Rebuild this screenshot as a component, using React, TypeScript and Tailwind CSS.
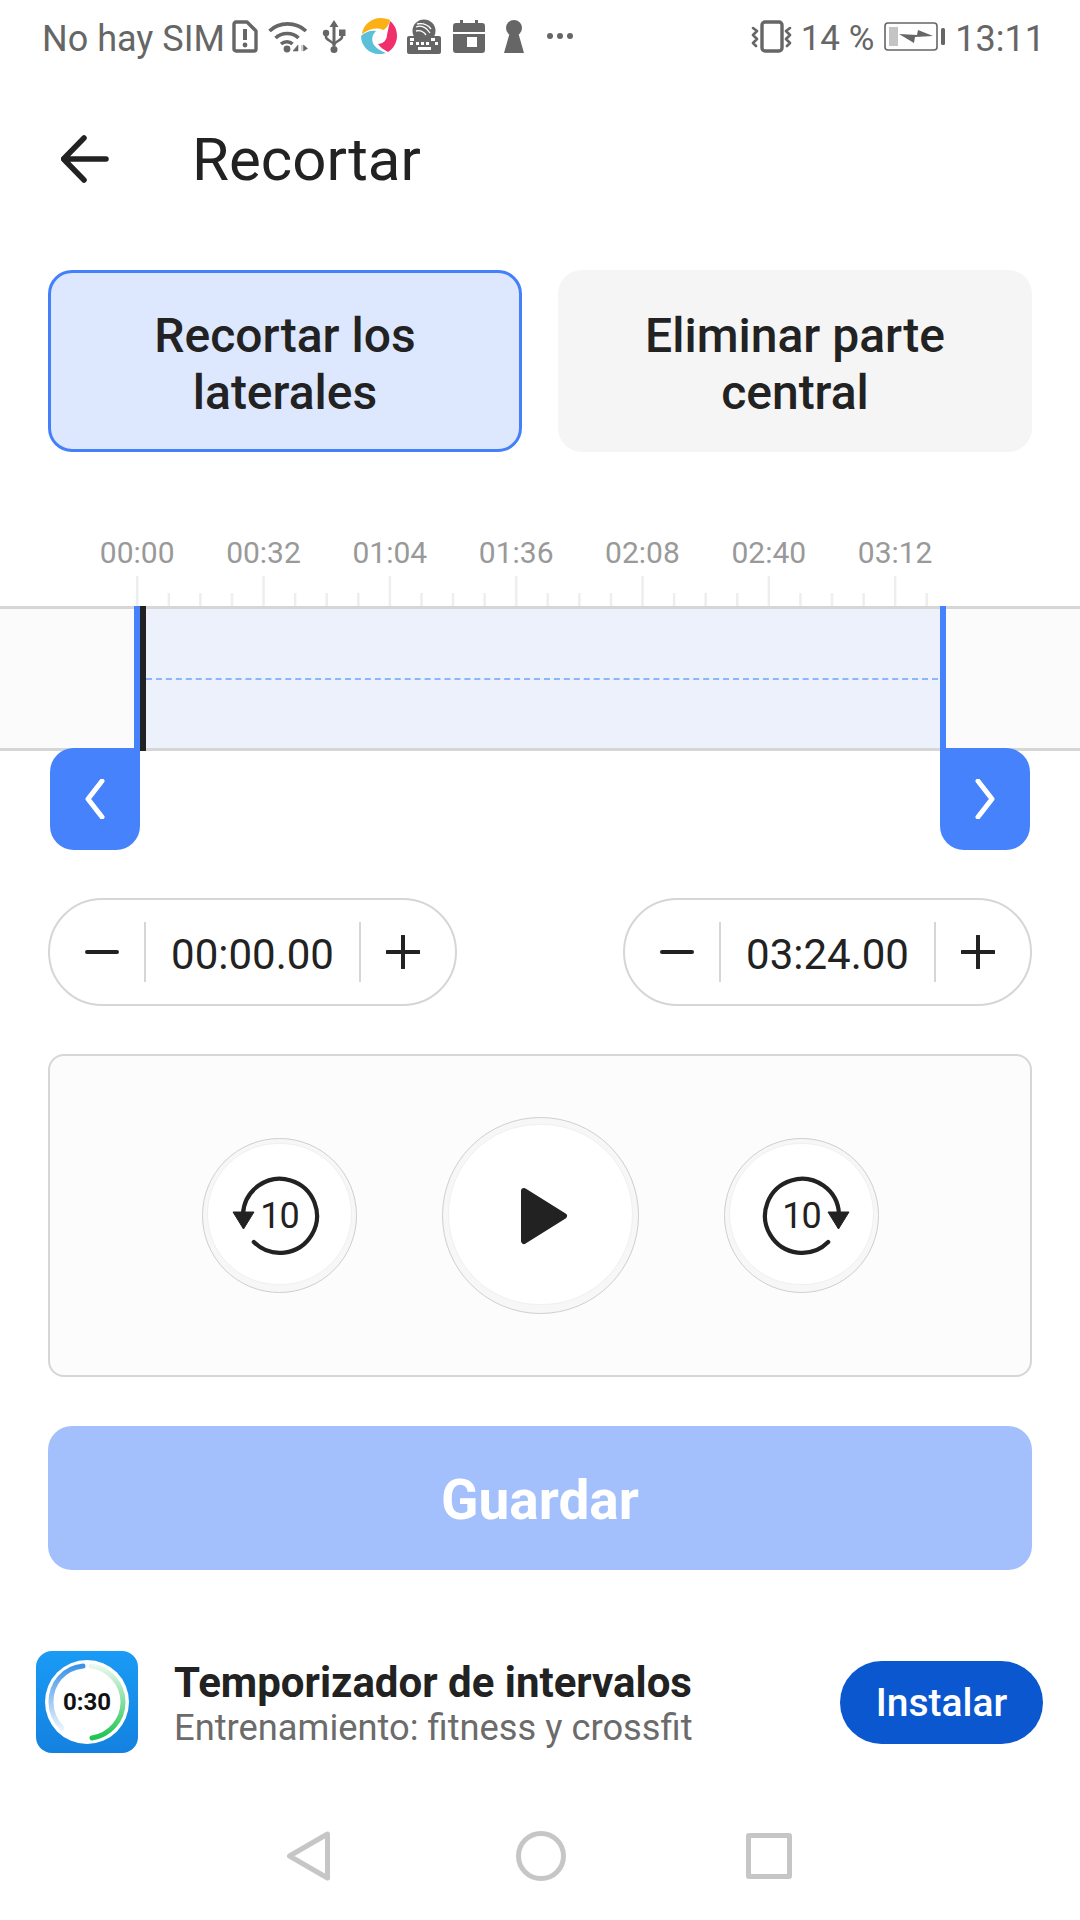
const roboto = "font-['Roboto',sans-serif]";

const rulerLabels = ["00:00", "00:32", "01:04", "01:36", "02:08", "02:40", "03:12"];

function SimAlert() {
  return (
    <svg width="26" height="33" viewBox="0 0 26 33" className="ml-[24px]">
      <path d="M4 2h11l9 9v18a2 2 0 0 1-2 2H4a2 2 0 0 1-2-2V4a2 2 0 0 1 2-2z" fill="none" stroke="#666" strokeWidth="3.4" strokeLinejoin="round" />
      <path d="M13 9v11" stroke="#666" strokeWidth="4" />
      <circle cx="13" cy="25" r="2.4" fill="#666" />
    </svg>
  );
}

function Wifi() {
  return (
    <svg width="40" height="33" viewBox="0 0 40 33" className="ml-[10px]">
      <g fill="none" stroke="#666" strokeWidth="3.6">
        <path d="M1.5 11C11 1.5 28 1.5 38 11" />
        <path d="M7.5 18c6.5-6 17-6 23 0" />
        <path d="M13 24c3.500-3 8.500-3 11.500 0" />
      </g>
      <circle cx="19" cy="29" r="3.400" fill="#666" />
      <path d="M25 31l5-6v6zM34 25v6M35.500 25l4 3.500-4 2.500z" fill="#666" stroke="#666" strokeWidth="0.6" />
    </svg>
  );
}

function Usb() {
  return (
    <svg width="24" height="35" viewBox="0 0 24 35" className="ml-[14px]">
      <path d="M12 1l4.500 7h-3v19h-3V8h-3z" fill="#666" />
      <circle cx="12" cy="30.500" r="3.500" fill="#666" />
      <circle cx="4" cy="14" r="3.200" fill="#666" />
      <rect x="17" y="10.500" width="6.500" height="6.500" fill="#666" />
      <path d="M4 15v3c0 3 8 5 8 8M20 15v3c0 3-8 5-8 8" fill="none" stroke="#666" strokeWidth="2.600" />
    </svg>
  );
}

function Pinwheel() {
  return (
    <svg width="36" height="36" viewBox="0 0 36 36" className="ml-[15px]">
      <path d="M1 16C2 7 10 0 20 0c4 0 7 1 9 2-1 5-4 9-7 10-6-3-14-1-21 4z" fill="#fbb016" />
      <path d="M29 3c5 4 7 9 7 15 0 7-4 13-9 16-4-2-8-5-10-8 5 0 9-4 9-9 1-5 2-10 3-14z" fill="#f0306c" />
      <path d="M0 18c4-4 10-6 15-5-4 4-5 9-2 14 3 4 7 6 12 8-3 1-5 1-7 1C8 36 0 28 0 18z" fill="#5cc0d8" />
    </svg>
  );
}

function Swiftkey() {
  return (
    <svg width="34" height="35" viewBox="0 0 34 35" className="ml-[10px]">
      <circle cx="17" cy="12" r="11.500" fill="#666" />
      <path d="M9 8c5-2 10 0 14 6M10 5c6-1 11 1 14 5M9 12c4-1 7 0 10 4" fill="none" stroke="#fff" strokeWidth="1.300" />
      <path d="M2 17h30a2 2 0 0 1 2 2v14a2 2 0 0 1-2 2H2a2 2 0 0 1-2-2V19a2 2 0 0 1 2-2z" fill="#666" />
      <path d="M3 19h4v3H3zM9 23h3v3H9zM14 23h3v3h-3zM19 23h3v3h-3zM24 19h4v3h-4zM28 23h3v3h-3zM3 23h3v3H3zM11 28h13v3H11z" fill="#fff" />
    </svg>
  );
}

function CalendarIcon() {
  return (
    <svg width="32" height="33" viewBox="0 0 32 33" className="ml-[12px]">
      <path d="M3 3h26a3 3 0 0 1 3 3v6H0V6a3 3 0 0 1 3-3zM0 14h32v16a3 3 0 0 1-3 3H3a3 3 0 0 1-3-3z" fill="#666" />
      <rect x="7" y="0" width="3" height="4" fill="#666" />
      <rect x="22" y="0" width="3" height="4" fill="#666" />
      <rect x="14" y="17" width="10" height="10" fill="#fff" />
    </svg>
  );
}

function Keyhole() {
  return (
    <svg width="20" height="33" viewBox="0 0 20 33" className="ml-[19px]">
      <circle cx="10" cy="8" r="8" fill="#666" />
      <path d="M6 12h8l6 21H0z" fill="#666" />
    </svg>
  );
}

function Vibrate() {
  return (
    <svg width="41" height="33" viewBox="0 0 41 33">
      <rect x="11" y="2" width="20" height="29" rx="3" fill="none" stroke="#666" strokeWidth="3.400" />
      <path d="M2 8l4 3-4 4 4 4-4 4 3 3M39 8l-4 3 4 4-4 4 4 4-3 3" fill="none" stroke="#666" strokeWidth="2.600" strokeLinecap="round" strokeLinejoin="round" />
    </svg>
  );
}

function Battery() {
  return (
    <svg width="61" height="29" viewBox="0 0 61 29" className="ml-[10px]">
      <rect x="1" y="1" width="52" height="27" rx="3" fill="none" stroke="#666" strokeWidth="1.600" />
      <rect x="5" y="5" width="9" height="19" fill="#c4c4c4" />
      <path d="M15 12l18 1 1-5 15 6-18 1-1 6z" fill="#666" />
      <rect x="57" y="6" width="4" height="17" rx="1.500" fill="#666" />
    </svg>
  );
}

function StatusBar() {
  return (
    <div className={`flex items-center justify-between h-[72px] pl-[43px] pr-[35px] text-[#666] ${roboto}`}>
      <div className="flex items-center">
        <span className="text-[36px] leading-none pt-[5px] -ml-[1px] -mr-[17px]">No hay SIM</span>
        <SimAlert />
        <Wifi />
        <Usb />
        <Pinwheel />
        <Swiftkey />
        <CalendarIcon />
        <Keyhole />
        <div className="flex gap-[4px] ml-[23px]">
          <span className="w-[6px] h-[6px] rounded-full bg-[#666]" />
          <span className="w-[6px] h-[6px] rounded-full bg-[#666]" />
          <span className="w-[6px] h-[6px] rounded-full bg-[#666]" />
        </div>
      </div>
      <div className="flex items-center">
        <Vibrate />
        <span className="text-[35px] leading-none pt-[5px] ml-[9px]">14 %</span>
        <Battery />
        <span className="text-[36px] leading-none pt-[5px] ml-[10px]">13:11</span>
      </div>
    </div>
  );
}

function Header() {
  return (
    <div className="flex items-center h-[198px] pl-[61px] pb-[25px]">
      <svg width="48" height="48" viewBox="0 0 48 48">
        <path d="M45 24H3M23 3L2.500 24 23 45" fill="none" stroke="#222" strokeWidth="5.500" strokeLinecap="round" strokeLinejoin="round" />
      </svg>
      <h1 className={`ml-[83px] pt-[2px] text-[60px] leading-none font-normal text-[#222] ${roboto}`}>Recortar</h1>
    </div>
  );
}

function ModeTabs() {
  return (
    <div className={`flex justify-between h-[182px] mx-[48px] ${roboto}`}>
      <div className="flex items-center justify-center w-[474px] pt-[5px] rounded-[24px] border-[3px] border-[#4480fa] bg-[#dde7fd] text-center text-[48px] leading-[57px] font-medium text-[#222]">
        <span>Recortar los<br />laterales</span>
      </div>
      <div className="flex items-center justify-center w-[474px] pt-[5px] rounded-[24px] bg-[#f5f5f5] text-center text-[48px] leading-[57px] font-medium text-[#222]">
        <span>Eliminar parte<br />central</span>
      </div>
    </div>
  );
}

function RulerTicks() {
  const ticks = [];
  for (let n = 0; n <= 25; n++) {
    const major = n % 4 === 0;
    ticks.push(<rect key={n} x={137 + n * 31.58 - 1} y={major ? 0 : 17} width="2.500" height={major ? 30 : 13} fill="#eeeeee" />);
  }
  return (
    <svg width="1080" height="30" viewBox="0 0 1080 30" className="block">
      {ticks}
    </svg>
  );
}

function Timeline() {
  return (
    <div className={`mt-[84px] ${roboto}`}>
      <div className="flex pl-[74px] text-[#999] text-[30px] leading-[34px] h-[40px]">
        {rulerLabels.map(l => (
          <span key={l} className="w-[126.33px] text-center">{l}</span>
        ))}
      </div>
      <RulerTicks />
      <div className="relative flex h-[145px] border-y-[3px] border-[#d6d6d6] bg-[#fbfbfb]">
        <div className="w-[140px]" />
        <div className="relative w-[800px] bg-[#ecf1fb]">
          <div className="absolute left-[6px] right-[2px] top-[69px] border-t-[2px] border-dashed border-[#8cb4ff]" />
        </div>
        {/* left handle */}
        <div className="absolute left-[134px] -top-[3px] w-[6px] h-[145px] bg-[#4582fc]" />
        <div className="absolute left-[140px] -top-[3px] w-[6px] h-[145px] bg-[#222]" />
        <div className="absolute left-[50px] top-[139px] w-[90px] h-[102px] rounded-[24px] rounded-tr-none bg-[#4582fc] flex items-center justify-center">
          <svg width="20" height="40" viewBox="0 0 20 40">
            <path d="M17 2L3 20l14 18" fill="none" stroke="#fff" strokeWidth="5" strokeLinecap="round" strokeLinejoin="round" />
          </svg>
        </div>
        {/* right handle */}
        <div className="absolute left-[940px] -top-[3px] w-[6px] h-[145px] bg-[#4582fc]" />
        <div className="absolute left-[940px] top-[139px] w-[90px] h-[102px] rounded-[24px] rounded-tl-none bg-[#4582fc] flex items-center justify-center">
          <svg width="20" height="40" viewBox="0 0 20 40">
            <path d="M3 2l14 18L3 38" fill="none" stroke="#fff" strokeWidth="5" strokeLinecap="round" strokeLinejoin="round" />
          </svg>
        </div>
      </div>
    </div>
  );
}

function TimeField({ value }: { value: string }) {
  return (
    <div className={`flex items-center h-[108px] w-[409px] rounded-full border-[2px] border-[#d6d6d6] text-[#222] ${roboto}`}>
      <div className="flex justify-center w-[94px] pl-[10px]">
        <svg width="34" height="34" viewBox="0 0 34 34">
          <path d="M2 17h30" stroke="#222" strokeWidth="4" strokeLinecap="round" />
        </svg>
      </div>
      <div className="w-[2px] h-[60px] bg-[#d6d6d6]" />
      <div className="flex-1 pt-[5px] text-center text-[42px] leading-none">{value}</div>
      <div className="w-[2px] h-[60px] bg-[#d6d6d6]" />
      <div className="flex justify-center w-[94px] pr-[11px]">
        <svg width="34" height="34" viewBox="0 0 34 34">
          <path d="M1 17h32M17 1v32" stroke="#222" strokeWidth="4" strokeLinecap="round" />
        </svg>
      </div>
    </div>
  );
}

function SkipButton({ forward }: { forward?: boolean }) {
  return (
    <div className="relative flex items-center justify-center w-[155px] h-[155px] rounded-full bg-[#f7f7f7] border-[1.500px] border-[#cfcfcf]">
      <div className="absolute left-[4px] right-[4px] top-[4px] bottom-[7px] rounded-full bg-white border-[1px] border-[#f0f0f0]" />
      <svg width="96" height="84" viewBox="0 0 96 84" className="relative">
        <g transform={forward ? "translate(96 0) scale(-1 1)" : undefined}>
          <path d="M11 40A37 37 0 1 1 21.800 68" fill="none" stroke="#222" strokeWidth="4.200" strokeLinecap="round" />
          <path d="M1 38h21L11.500 55z" fill="#222" stroke="#222" strokeWidth="1" strokeLinejoin="round" />
        </g>
      </svg>
      <span className={`absolute inset-0 flex items-center justify-center text-[36px] leading-none tracking-[-1px] text-[#222] ${roboto}`}>10</span>
    </div>
  );
}

function PlayButton() {
  return (
    <div className="relative flex items-center justify-center w-[197px] h-[197px] rounded-full bg-[#f7f7f7] border-[1.500px] border-[#cfcfcf]">
      <div className="absolute left-[5px] right-[5px] top-[6px] bottom-[8px] rounded-full bg-white border-[1px] border-[#f0f0f0]" />
      <svg width="48" height="58" viewBox="0 0 48 58" className="relative ml-[7px]">
        <path d="M4 4l40 25L4 54z" fill="#222" stroke="#222" strokeWidth="6" strokeLinejoin="round" />
      </svg>
    </div>
  );
}

function Controls() {
  return (
    <div className="flex items-center mx-[48px] mt-[48px] h-[323px] pl-[152px] rounded-[16px] border-[2px] border-[#d6d6d6] bg-[#fcfcfc]">
      <SkipButton />
      <div className="ml-[85px]"><PlayButton /></div>
      <div className="ml-[85px]"><SkipButton forward /></div>
    </div>
  );
}

function TimerIcon() {
  return (
    <div className="w-[102px] h-[102px] rounded-[16px] bg-gradient-to-b from-[#1a9bf5] to-[#1481e0] flex items-center justify-center">
      <div className="relative w-[84px] h-[84px] rounded-full bg-white flex items-center justify-center">
        <svg width="84" height="84" viewBox="0 0 84 84" className="absolute inset-0">
          <defs>
            <linearGradient id="bl" x1="0" y1="0" x2="0" y2="1">
              <stop offset="0" stopColor="#3d93e8" />
              <stop offset="1" stopColor="#e8f2fb" />
            </linearGradient>
            <linearGradient id="gr" x1="0" y1="0" x2="0" y2="1">
              <stop offset="0" stopColor="#eaf8ee" />
              <stop offset="1" stopColor="#1fc452" />
            </linearGradient>
          </defs>
          <path d="M38 6C18 8 6 24 6 42c0 10 4 19 11 26" fill="none" stroke="url(#bl)" strokeWidth="5" strokeLinecap="round" />
          <path d="M46 6c18 2 32 18 32 36 0 18-13 33-31 36" fill="none" stroke="url(#gr)" strokeWidth="5" strokeLinecap="round" />
        </svg>
        <span className={`relative text-[24px] font-bold text-[#111] ${roboto}`}>0:30</span>
      </div>
    </div>
  );
}

function AdBanner() {
  return (
    <div className={`flex items-center mt-[81px] h-[102px] pl-[36px] pr-[37px] ${roboto}`}>
      <TimerIcon />
      <div className="ml-[36px] pt-[5px] flex-1">
        <div className="text-[42px] leading-[46px] font-bold text-[#222]">Temporizador de intervalos</div>
        <div className="text-[36.300px] leading-[44px] text-[#6b6b6b]">Entrenamiento: fitness y crossfit</div>
      </div>
      <div className="flex items-center justify-center w-[203px] h-[83px] pt-[2px] rounded-full bg-[#0b57d0] text-white text-[39px] font-medium">Instalar</div>
    </div>
  );
}

function NavBar() {
  return (
    <div className="flex items-center mt-[78px] h-[50px] pl-[287px]">
      <svg width="43" height="50" viewBox="0 0 43 50">
        <path d="M40.500 3v44L2.500 25z" fill="none" stroke="#c6c6c6" strokeWidth="5" strokeLinejoin="round" />
      </svg>
      <div className="ml-[186px] w-[50px] h-[50px] rounded-full border-[5px] border-[#c6c6c6]" />
      <div className="ml-[180px] w-[46px] h-[46px] rounded-[3px] border-[5px] border-[#c6c6c6]" />
    </div>
  );
}

export default function App() {
  return (
    <div className="w-[1080px] h-[1920px] bg-white overflow-hidden">
      <StatusBar />
      <Header />
      <ModeTabs />
      <Timeline />
      <div className="flex justify-between mx-[48px] mt-[147px]">
        <TimeField value="00:00.00" />
        <TimeField value="03:24.00" />
      </div>
      <Controls />
      <button className={`block mx-[48px] mt-[49px] w-[984px] h-[144px] pt-[5px] rounded-[24px] bg-[#a3c0fc] text-white text-[55px] font-bold ${roboto}`}>Guardar</button>
      <AdBanner />
      <NavBar />
    </div>
  );
}
